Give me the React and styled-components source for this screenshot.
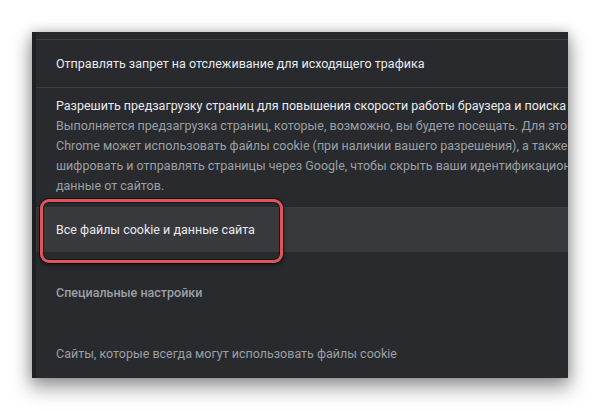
import React from "react";
import styled, { createGlobalStyle } from "styled-components";

const Global = createGlobalStyle`
  html, body { margin: 0; padding: 0; background: #ffffff; }
  body { font-family: Roboto, "Noto Sans", Arial, sans-serif; }
`;

const Stage = styled.div`
  width: 600px;
  height: 411px;
  padding: 32px 0 0 32px;
  box-sizing: border-box;
  background: #ffffff;
`;

const Panel = styled.div`
  width: 536px;
  height: 346px;
  display: flex;
  background: #292a2d;
  overflow: hidden;
  box-shadow: 0 8px 18px 2px rgba(0, 0, 0, 0.38), 0 0 10px rgba(0, 0, 0, 0.18);
`;

const Edge = styled.div`
  width: 4px;
  flex: none;
  background: #1f2023;
`;

const Content = styled.div`
  flex: 1;
  display: flex;
  flex-direction: column;
  padding-top: 7px;
  min-width: 0;
`;

const Row = styled.div`
  position: relative;
  display: flex;
  flex-direction: column;
  justify-content: ${(p) => (p.$tall ? "flex-start" : "center")};
  border-top: 1px solid #3d3e41;
  min-height: ${(p) => p.$h}px;
  padding: ${(p) => (p.$tall ? "8px 0 10px 20px" : "0 0 0 20px")};
  background: ${(p) => (p.$active ? "#38393c" : "transparent")};
  box-sizing: border-box;
`;

const Label = styled.div`
  font-size: 12.5px;
  line-height: 20px;
  color: #e8eaed;
  white-space: nowrap;
`;

const Secondary = styled.div`
  font-size: 12.5px;
  line-height: 20px;
  color: #9aa0a6;
  white-space: nowrap;
`;

const SubHeader = styled.div`
  font-size: 12.5px;
  line-height: 20px;
  font-weight: 500;
  color: #9aa0a6;
  padding: 31px 0 0 20px;
  white-space: nowrap;
`;

const Note = styled.div`
  font-size: 12.5px;
  line-height: 20px;
  color: #9aa0a6;
  padding: 41px 0 0 20px;
  white-space: nowrap;
`;

const Highlight = styled.div`
  position: absolute;
  left: 4px;
  top: -9px;
  width: 243px;
  height: 64px;
  box-sizing: border-box;
  border: 3px solid #e0545d;
  border-radius: 9px;
  box-shadow: 0 0 0 1px rgba(0, 0, 0, 0.55), inset 0 0 0 1px rgba(0, 0, 0, 0.5),
    0 2px 5px rgba(0, 0, 0, 0.55);
  pointer-events: none;
`;

export default function App() {
  return (
    <>
      <Global />
      <Stage>
        <Panel>
          <Edge />
          <Content>
            <Row $h={48}>
              <Label>Отправлять запрет на отслеживание для исходящего трафика</Label>
            </Row>
            <Row $tall $h={120}>
              <Label>Разрешить предзагрузку страниц для повышения скорости работы браузера и поиска</Label>
              <Secondary>
                Выполняется предзагрузка страниц, которые, возможно, вы будете посещать. Для этого
                <br />
                Chrome может использовать файлы cookie (при наличии вашего разрешения), а также
                <br />
                шифровать и отправлять страницы через Google, чтобы скрыть ваши идентификационные
                <br />
                данные от сайтов.
              </Secondary>
            </Row>
            <Row $active $h={45}>
              <Label>Все файлы cookie и данные сайта</Label>
              <Highlight />
            </Row>
            <SubHeader>Специальные настройки</SubHeader>
            <Note>Сайты, которые всегда могут использовать файлы cookie</Note>
          </Content>
        </Panel>
      </Stage>
    </>
  );
}
